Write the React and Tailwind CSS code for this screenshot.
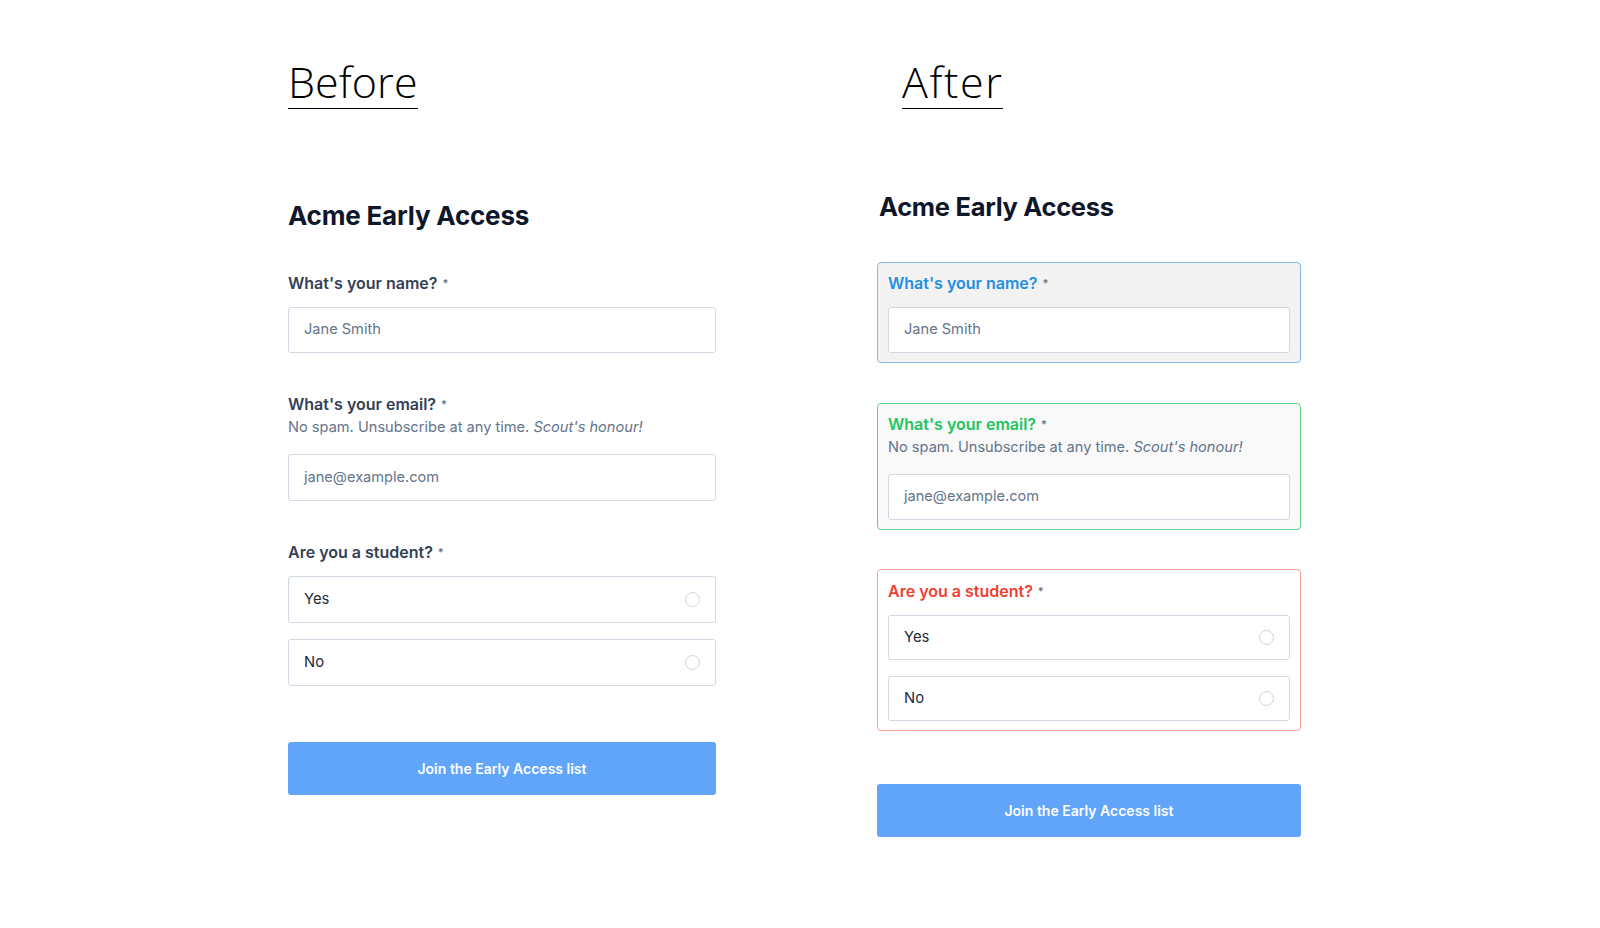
import React from "react";

function Radio() {
  return <span className="w-[15px] h-[15px] rounded-full border border-[#cbd5e1] bg-white shrink-0" />;
}

function Label({ children, color = "text-[#334155]" }) {
  return (
    <div className={`text-[16px] leading-6 font-semibold ${color}`}>
      {children}
      <span className="ml-[5px] text-[11px] text-[#64748b] align-[2px]">*</span>
    </div>
  );
}

function Help() {
  return (
    <div className="text-[14.6px] leading-[22px] text-[#64748b]">
      No spam. Unsubscribe at any time. <em>Scout's honour!</em>
    </div>
  );
}

function Input({ placeholder, h = "h-[46px]" }) {
  return (
    <div className={`${h} rounded-[3px] border border-[#cfd8e3] bg-white flex items-center px-[15px] text-[14.6px] text-[#64748b]`}>
      {placeholder}
    </div>
  );
}

function Option({ label, h = "h-[46px]" }) {
  return (
    <div className={`${h} rounded-[3px] border border-[#cfd8e3] bg-white flex items-center justify-between pl-[15px] pr-[15px] text-[14.8px] text-[#1e293b]`}>
      <span>{label}</span>
      <Radio />
    </div>
  );
}

function Button({ h }) {
  return (
    <div className={`${h} rounded-[3px] bg-[#60a5fa] flex items-center justify-center text-white text-[14px] font-semibold`}>
      Join the Early Access list
    </div>
  );
}

export default function App() {
  return (
    <div className="w-[1600px] h-[928px] bg-white flex font-['Inter',sans-serif]">
      {/* Before */}
      <div className="ml-[288px] w-[428px] pt-[58px] flex flex-col">
        <div>
          <span className="inline-block font-['Open_Sans',sans-serif] font-light text-[43px] leading-[48px] tracking-[0.1px] text-black pb-[2px] border-b border-black">
            Before
          </span>
        </div>
        <h1 className="mt-[91px] text-[26px] leading-[32px] font-bold text-[#0f172a] tracking-[-0.2px]">
          Acme Early Access
        </h1>
        <div className="mt-[39px]">
          <Label>What's your name?</Label>
          <div className="mt-3">
            <Input placeholder="Jane Smith" />
          </div>
        </div>
        <div className="mt-[39px]">
          <Label>What's your email?</Label>
          <Help />
          <div className="mt-4">
            <Input placeholder="jane@example.com" h="h-[47px]" />
          </div>
        </div>
        <div className="mt-[39px]">
          <Label>Are you a student?</Label>
          <div className="mt-3 flex flex-col gap-4">
            <Option label="Yes" h="h-[47px]" />
            <Option label="No" h="h-[47px]" />
          </div>
        </div>
        <div className="mt-[56px]">
          <Button h="h-[53px]" />
        </div>
      </div>

      {/* After */}
      <div className="ml-[161px] w-[424px] pt-[58px] flex flex-col">
        <div className="pl-[25px]">
          <span className="inline-block font-['Open_Sans',sans-serif] font-light text-[43px] leading-[48px] tracking-[1.6px] text-black pb-[2px] border-b border-black">
            After
          </span>
        </div>
        <h1 className="mt-[82px] pl-[2px] text-[25.5px] leading-[32px] font-bold text-[#0f172a] tracking-[-0.3px]">
          Acme Early Access
        </h1>
        <div className="mt-[39px] rounded-[4px] border border-[#83b9ea] bg-[#f2f2f2] pt-2 px-[10px] pb-[9px]">
          <Label color="text-[#1d8fe1]">What's your name?</Label>
          <div className="mt-3">
            <Input placeholder="Jane Smith" />
          </div>
        </div>
        <div className="mt-[40px] rounded-[4px] border border-[#5fd38a] bg-[#f9f9f9] pt-2 px-[10px] pb-[9px]">
          <Label color="text-[#22c55e]">What's your email?</Label>
          <Help />
          <div className="mt-4">
            <Input placeholder="jane@example.com" />
          </div>
        </div>
        <div className="mt-[39px] rounded-[4px] border border-[#f4a19b] bg-white pt-[9px] px-[10px] pb-[9px]">
          <Label color="text-[#ef3e32]">Are you a student?</Label>
          <div className="mt-3 flex flex-col gap-4">
            <Option label="Yes" h="h-[45px]" />
            <Option label="No" h="h-[45px]" />
          </div>
        </div>
        <div className="mt-[53px]">
          <Button h="h-[53px]" />
        </div>
      </div>
    </div>
  );
}
